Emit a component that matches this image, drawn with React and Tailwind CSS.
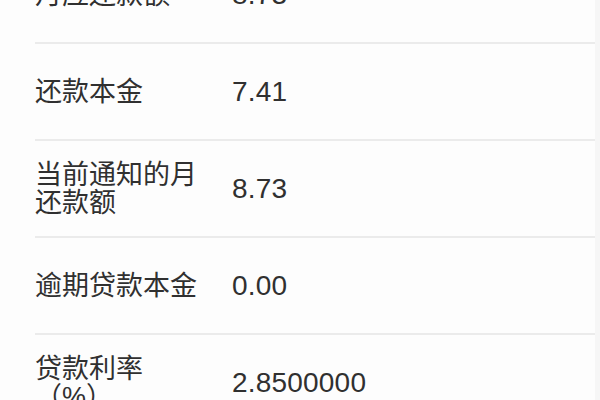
import React from "react";

const rows = [
  { label: "月应还款额", value: "8.73" },
  { label: "还款本金", value: "7.41" },
  { label: "当前通知的月还款额", value: "8.73" },
  { label: "逾期贷款本金", value: "0.00" },
  { label: "贷款利率（%）", value: "2.8500000" },
];

export default function App() {
  return (
    <div
      className="w-[600px] h-[400px] overflow-hidden bg-[#fdfdfd] flex text-[#303030]"
      style={{ fontFamily: '"Liberation Sans", "Noto Sans CJK SC", sans-serif' }}
    >
      <div className="flex-1 pl-[35px]">
        <div className="mt-[-53px] flex flex-col">
          {rows.map((r, i) => (
            <div
              key={i}
              className="h-[97px] flex items-center border-b-2 border-[#ebebeb]"
            >
              <div className="w-[170px] text-[27px] leading-[28px]">{r.label}</div>
              <div className="ml-[27px] text-[28px] leading-[32px] tracking-[0.2px]">{r.value}</div>
            </div>
          ))}
        </div>
      </div>
      <div className="w-[5px] bg-[#f6f6f6]" />
    </div>
  );
}
